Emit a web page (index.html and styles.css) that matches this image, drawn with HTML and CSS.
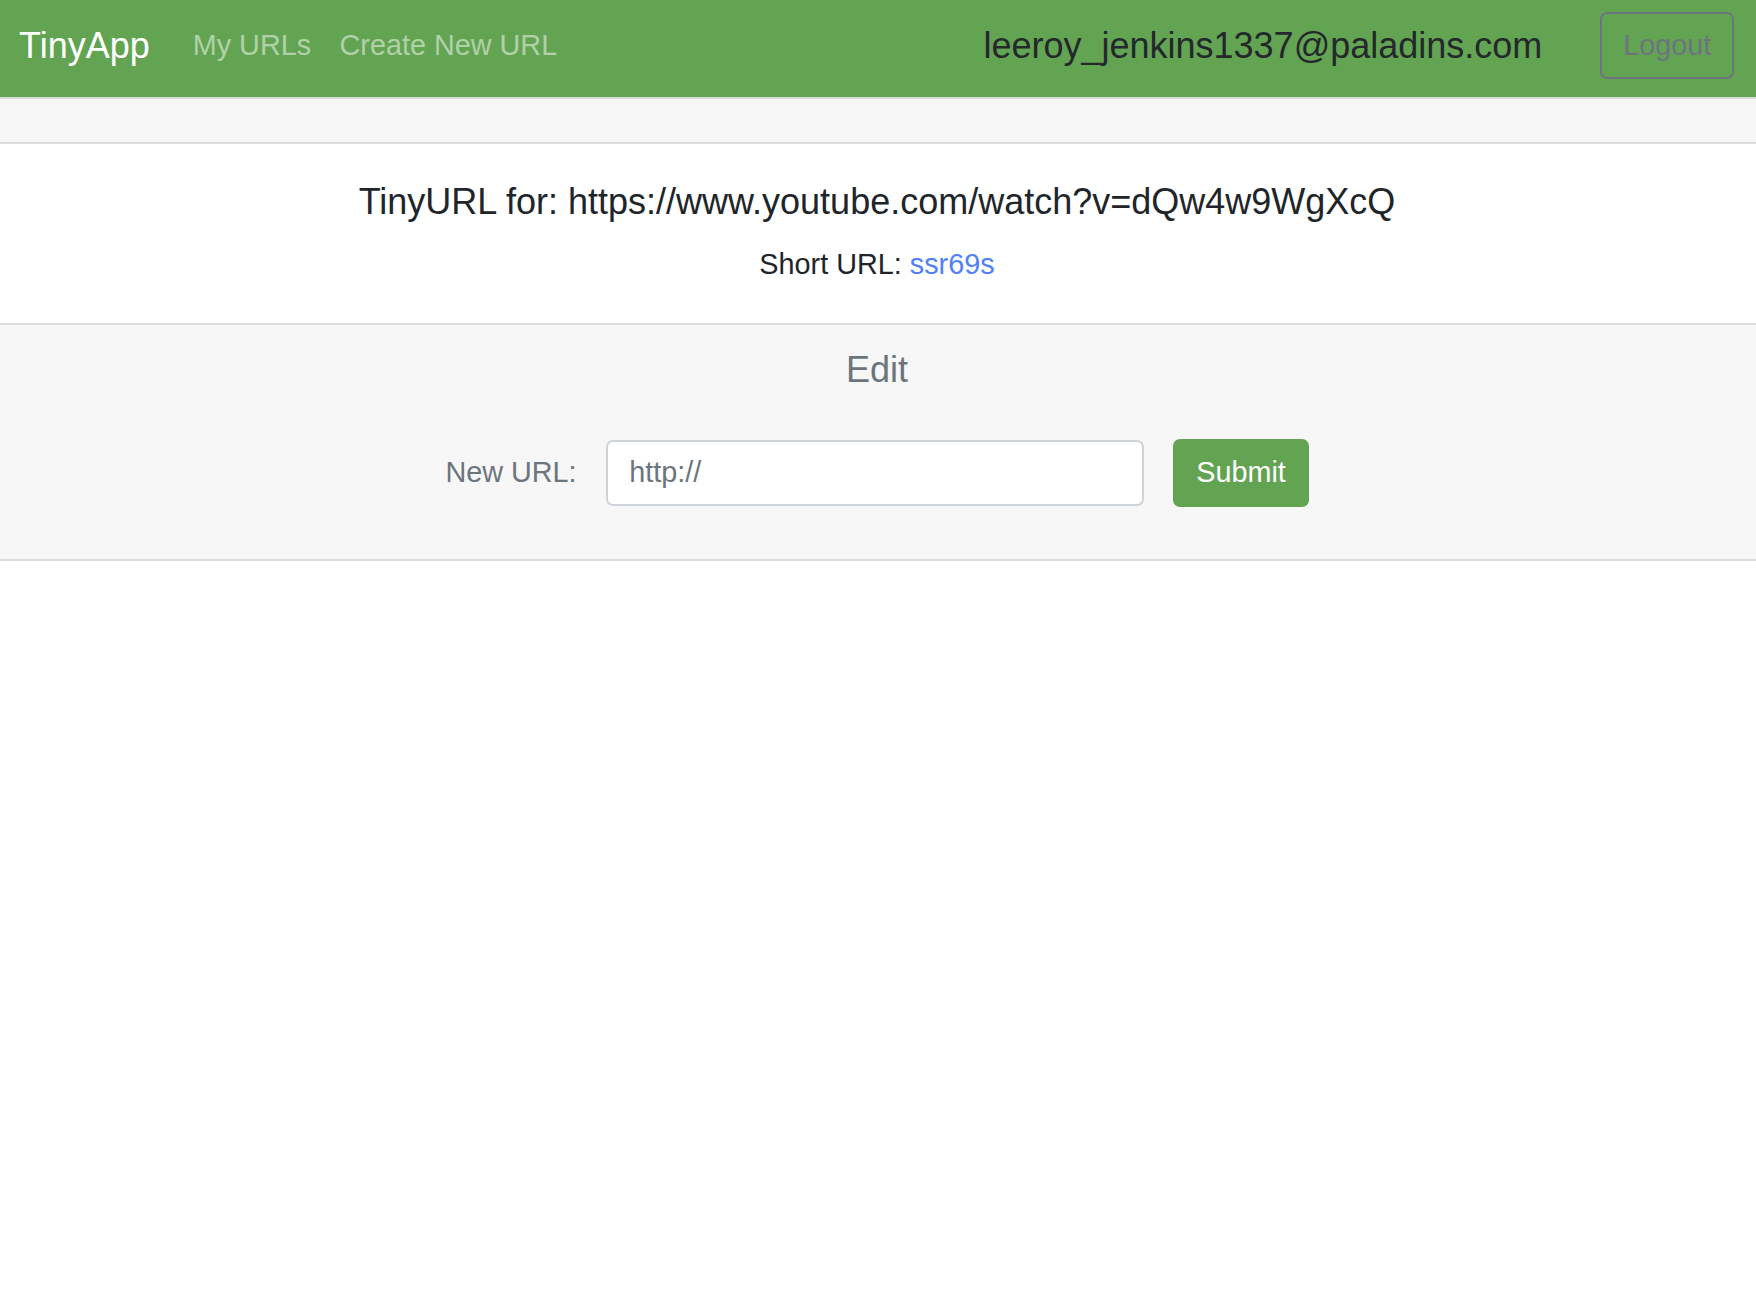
FILE: index.html
```html
<!DOCTYPE html>
<html lang="en">
<head>
<meta charset="utf-8">
<title>TinyApp</title>
<link rel="stylesheet" href="styles.css">
</head>
<body>
<nav class="navbar">
  <a class="brand" href="#">TinyApp</a>
  <a class="nav-link first" href="#">My URLs</a>
  <a class="nav-link second" href="#">Create New URL</a>
  <span class="user">leeroy_jenkins1337@paladins.com</span>
  <button class="btn-logout" type="button">Logout</button>
</nav>
<div class="card">
  <div class="card-header"></div>
  <div class="card-body">
    <h5 class="card-title">TinyURL for: https://www.youtube.com/watch?v=dQw4w9WgXcQ</h5>
    <p class="card-text">Short URL: <a class="short-link" href="#">ssr69s</a></p>
  </div>
  <div class="card-footer">
    <h5 class="edit-title">Edit</h5>
    <form class="edit-form">
      <label class="edit-label" for="newurl">New URL:</label>
      <input class="edit-input" id="newurl" type="text" placeholder="http://">
      <button class="btn-submit" type="button">Submit</button>
    </form>
  </div>
</div>
</body>
</html>
```
FILE: styles.css
```css
* { box-sizing: border-box; }
html, body {
  margin: 0;
  padding: 0;
  background: #ffffff;
  font-family: "Liberation Sans", Arial, sans-serif;
  color: #212529;
}
.navbar {
  display: flex;
  align-items: center;
  height: 97px;
  padding: 12px 21.7px 18px 19px;
  background: #63a453;
}
.brand {
  font-size: 36px;
  line-height: 54px;
  color: #ffffff;
  text-decoration: none;
}
.nav-link {
  font-size: 28.8px;
  line-height: 43.2px;
  color: rgba(255, 255, 255, 0.5);
  text-decoration: none;
}
.nav-link.first { margin-left: 43px; }
.nav-link.second { margin-left: 28.4px; }
.user {
  margin-left: auto;
  margin-right: 58px;
  font-size: 36px;
  line-height: 54px;
  color: #24282c;
}
.btn-logout {
  display: flex;
  align-items: center;
  justify-content: center;
  width: 134px;
  height: 67px;
  padding: 0 21px;
  border: 2px solid #6c757d;
  border-radius: 7px;
  background: transparent;
  color: #6c757d;
  font-family: "Liberation Sans", Arial, sans-serif;
  font-size: 28.8px;
  line-height: 43.2px;
}
.card {
  display: flex;
  flex-direction: column;
}
.card-header {
  height: 47px;
  background: #f7f7f7;
  border-top: 2px solid #dcdcdc;
  border-bottom: 2px solid #dcdcdc;
}
.card-body {
  padding: 36px 37px 37px 35px;
  text-align: center;
  background: #ffffff;
}
.card-title {
  margin: 0 0 19.5px;
  font-size: 36px;
  line-height: 43.2px;
  font-weight: 400;
  color: #212529;
}
.card-text {
  margin: 0;
  font-size: 28.8px;
  line-height: 43.2px;
  color: #212529;
}
.short-link {
  color: #5080f8;
  text-decoration: none;
}
.card-footer {
  padding: 23px 37px 52px 35px;
  background: #f7f7f7;
  border-top: 2px solid #dcdcdc;
  border-bottom: 2px solid #dcdcdc;
  text-align: center;
  color: #6c757d;
}
.edit-title {
  margin: 0 0 48px;
  font-size: 36px;
  line-height: 43.2px;
  font-weight: 400;
  color: #6c757d;
}
.edit-form {
  display: flex;
  align-items: center;
  justify-content: center;
  margin: 0;
}
.edit-label {
  font-size: 28.8px;
  line-height: 43.2px;
  color: #6c757d;
  margin-right: 29px;
}
.edit-input {
  width: 538px;
  height: 66px;
  padding: 0 21.6px;
  border: 2px solid #ced4da;
  border-radius: 7px;
  background: #ffffff;
  font-family: "Liberation Sans", Arial, sans-serif;
  font-size: 28.8px;
  color: #495057;
  outline: none;
}
.edit-input::placeholder {
  color: #6c757d;
  opacity: 1;
}
.btn-submit {
  margin-left: 29px;
  width: 136px;
  height: 67.5px;
  padding: 0 21.6px;
  border: 2px solid #63a453;
  border-radius: 7px;
  background: #63a453;
  color: #ffffff;
  font-family: "Liberation Sans", Arial, sans-serif;
  font-size: 28.8px;
  line-height: 43.2px;
}
```
